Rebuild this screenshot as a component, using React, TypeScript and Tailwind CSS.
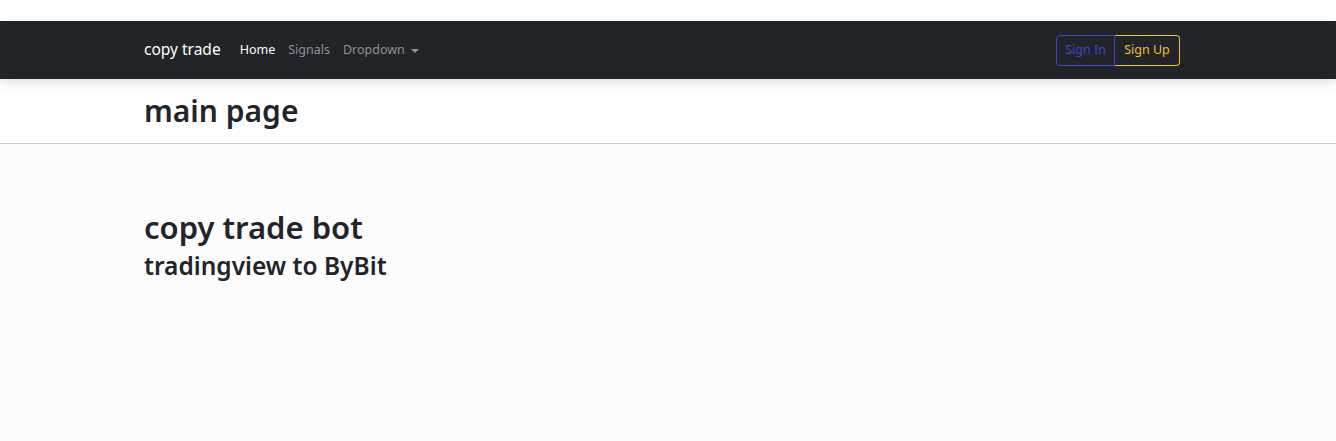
import React from "react";

export default function App() {
  const font = { fontFamily: '"Noto Sans", "Open Sans", sans-serif' };
  return (
    <div className="min-h-[441px] bg-[#fcfcfc] text-[#212529]" style={font}>
      <div className="h-[21px] bg-white" />
      <nav className="relative z-10 flex h-[58px] items-center bg-[#212529] pl-[144px] pr-[156px] shadow-[0_4px_10px_rgba(0,0,0,0.12)]">
        <span className="mr-[19px] text-[15.5px] leading-none text-white">copy trade</span>
        <div className="flex items-center gap-[13px] text-[12.5px] leading-none">
          <span className="text-white">Home</span>
          <span className="text-[#8e9091]">Signals</span>
          <span className="flex items-center gap-[6px] text-[#8e9091]">
            Dropdown
            <span className="mt-[1px] h-0 w-0 border-x-[4px] border-t-[4px] border-x-transparent border-t-[#8e9091]" />
          </span>
        </div>
        <div className="ml-auto flex h-[31px] text-[12.5px]">
          <button className="flex w-[59px] items-center justify-center rounded-l-[4px] border border-[#3b47c9] text-[#3b47c9]">
            Sign In
          </button>
          <button className="flex w-[65px] items-center justify-center rounded-r-[4px] border border-l-0 border-[#f0bf2c] text-[#f0bf2c]">
            Sign Up
          </button>
        </div>
      </nav>
      <header className="flex h-[65px] items-center border-b border-[#cccccc] bg-white pl-[144px]">
        <h1 className="text-[30px] font-semibold leading-none">main page</h1>
      </header>
      <main className="pl-[144px] pt-[65px]">
        <h2 className="text-[31px] font-semibold leading-[36px]">copy trade bot</h2>
        <h3 className="mt-[6px] text-[24.5px] font-semibold leading-[30px]">tradingview to ByBit</h3>
      </main>
    </div>
  );
}
